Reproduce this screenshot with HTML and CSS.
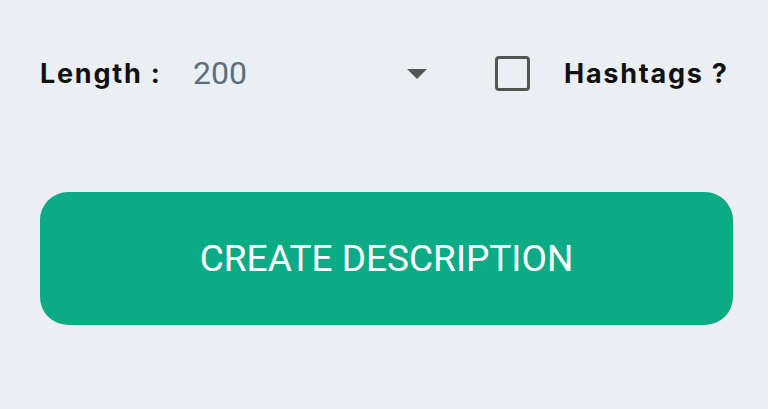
FILE: index.html
```html
<!DOCTYPE html>
<html lang="en">
<head>
    <meta charset="UTF-8">
    <meta name="viewport" content="width=device-width, initial-scale=1.0">
    <title>Create Description</title>
    <link rel="stylesheet" href="styles.css">
</head>
<body>
    <div class="panel">
        <div class="options">
            <span class="label length">Length :</span>
            <div class="select">
                <span class="select-value">200</span>
                <svg class="select-arrow" width="20" height="10" viewBox="0 0 20 10">
                    <path d="M0 0 L20 0 L10 10 Z" fill="#555"></path>
                </svg>
            </div>
            <span class="checkbox"></span>
            <span class="label hashtags">Hashtags ?</span>
        </div>
        <button class="create-btn" type="button">CREATE DESCRIPTION</button>
    </div>
</body>
</html>
```

FILE: styles.css
```css
body {
    margin: 0;
    padding: 0;
    background-color: #ebeff3;
    font-family: Roboto, "Liberation Sans", sans-serif;
}
.panel {
    display: flex;
    flex-direction: column;
    padding: 55px 35px 0 40px;
}
.options {
    display: flex;
    align-items: center;
    height: 36px;
}
.label {
    font-family: Inter, "Noto Sans", sans-serif;
    font-weight: 700;
    font-size: 27px;
    letter-spacing: 0.065em;
    color: #111;
    white-space: nowrap;
}
.length {
    width: 153px;
}
.select {
    display: flex;
    align-items: center;
    justify-content: space-between;
    width: 234px;
}
.select-value {
    font-size: 32px;
    color: #5a6f7b;
}
.select-arrow {
    margin-top: 2px;
}
.checkbox {
    width: 29px;
    height: 29px;
    border: 3.5px solid #555;
    border-radius: 4px;
    margin-left: 68px;
}
.hashtags {
    margin-left: 34px;
}
.create-btn {
    margin-top: 101px;
    height: 133px;
    border: none;
    border-radius: 28px;
    background-color: #0dab85;
    color: #fff;
    font-family: Roboto, "Liberation Sans", sans-serif;
    font-size: 37px;
    font-weight: 400;
    cursor: pointer;
}
```
